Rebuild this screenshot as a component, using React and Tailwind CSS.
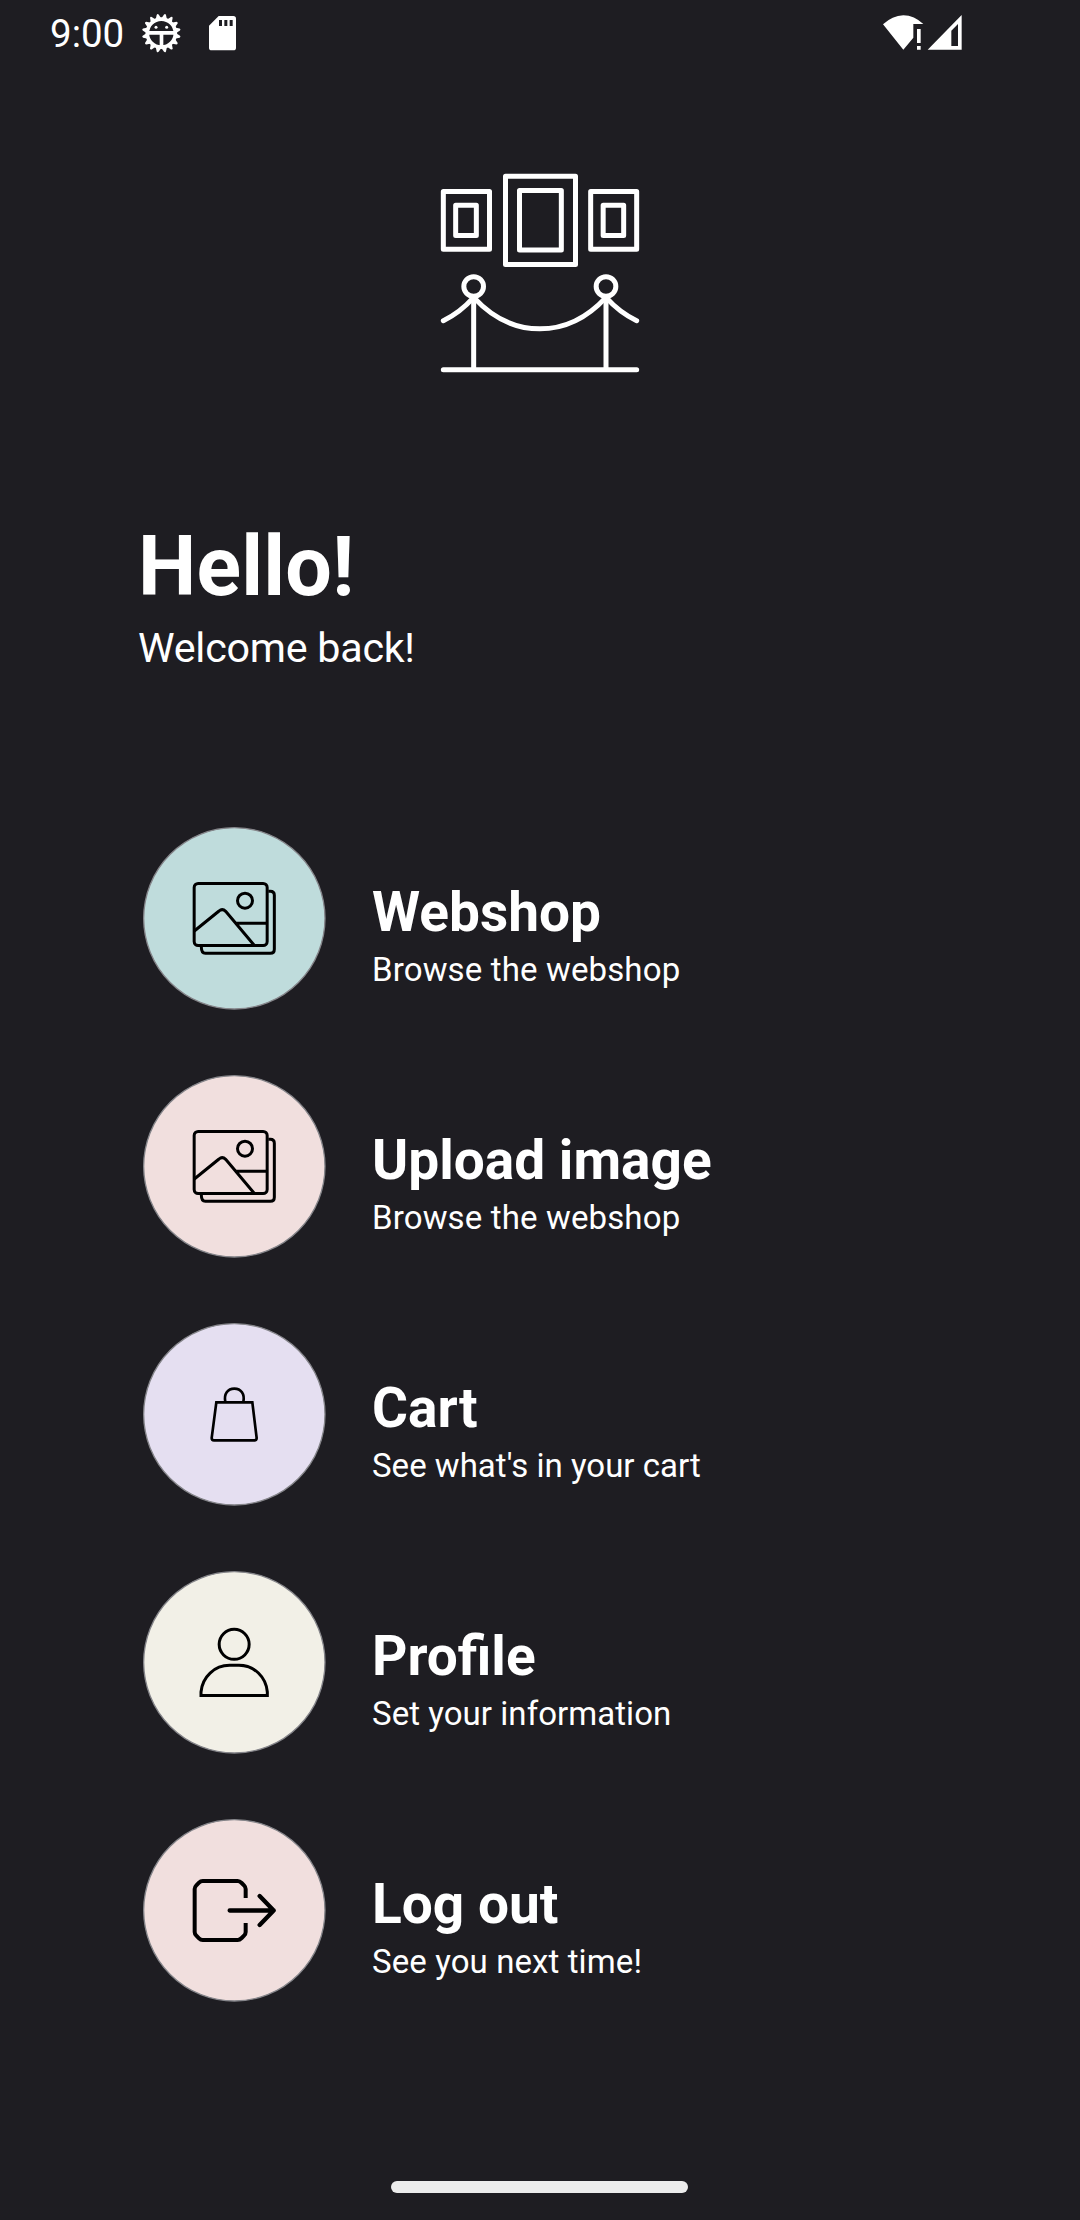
const ink = { fill: 'none', stroke: '#000' };

function Photos() {
  return (
    <g {...ink} strokeWidth="9">
      <rect x="193.500" y="205.500" width="219" height="186" rx="12" />
      <path d="M416 229H422Q434 229 434 241V403Q434 415 422 415H227Q215 415 215 396" />
      <circle cx="346" cy="257" r="22.500" />
      <path d="M194 348L268 288Q278 279 288 289L373 390M320 325H412" />
    </g>
  );
}

function Bag() {
  return (
    <g {...ink} strokeWidth="8">
      <path d="M260 277H368L381 384Q381 391 374 391H253Q246 391 246 384Z" />
      <path d="M287 276C282 252 294 236 314 236S346 252 341 276" />
    </g>
  );
}

function Person() {
  return (
    <g {...ink} strokeWidth="9">
      <circle cx="313.500" cy="253" r="45" />
      <path d="M214 406.500V396C218 351 254 316 300 316H328C374 316 409 351 413 396V406.500Z" />
    </g>
  );
}

function Exit() {
  return (
    <g {...ink} strokeWidth="12">
      <path d="M348 279V252Q348 246 343 241L336 234Q330 228 324 228H219Q213 228 208 233L200 241Q195 246 195 252V381Q195 387 200 392L208 400Q213 405 219 405H324Q330 405 336 399L343 392Q348 387 348 381V354" />
      <path d="M300 316.500H432M390 273L432 316.500L390 360" strokeWidth="13" strokeLinecap="round" strokeLinejoin="round" />
    </g>
  );
}

const items = [
  { title: 'Webshop', text: 'Browse the webshop', tracking: 'tracking-[0.14px]', color: '#bfdcdc', top: 36, Icon: Photos },
  { title: 'Upload image', text: 'Browse the webshop', tracking: 'tracking-[0.14px]', color: '#f1dfde', top: 36, Icon: Photos },
  { title: 'Cart', text: "See what's in your cart", tracking: 'tracking-[0.02px]', color: '#e5dff1', top: 39, Icon: Bag },
  { title: 'Profile', text: 'Set your information', tracking: 'tracking-[0.05px]', color: '#f2f0e7', top: 33, Icon: Person },
  { title: 'Log out', text: 'See you next time!', tracking: 'tracking-[0.1px]', color: '#f1dfde', top: 42, Icon: Exit },
];

const teeth = Array.from({ length: 16 }, (_, i) => i * 22.5);

function StatusBar() {
  return (
    <header className="flex h-[70px] items-start pl-[50px]">
      <span className="mt-[11px] w-[76px] whitespace-nowrap text-[38.500px] leading-[46px]">9:00</span>
      <svg className="ml-[14px] mt-[12px] h-[42px] w-[42px]" viewBox="330 36 126 126" fill="none" stroke="#fff">
        <circle cx="394" cy="99.500" r="42" strokeWidth="11" />
        <g fill="#fff" stroke="none">
          {teeth.map((a) => (
            <path key={a} d="M385 57L391 43Q394 39 397 43L403 57Z" transform={`rotate(${a + 11.25} 394 99.500)`} />
          ))}
          <path d="M350 93H438V104H400V142H389V104H350Z" />
          <circle cx="378" cy="82" r="4.500" />
          <circle cx="410" cy="82" r="4.500" />
        </g>
      </svg>
      <svg className="ml-[26px] mt-[15px] h-[36px] w-[28px]" viewBox="534 45 84 108">
        <path fill="#fff" fillRule="evenodd" d="M566 48H610Q618 48 618 56V143Q618 151 610 151H545Q537 151 537 143V77ZM567 60V78H576V60ZM583 60V78H592V60ZM599 60V78H608V60Z" />
      </svg>
      <svg className="ml-[646px] mt-[14px] h-[38px] w-[82px]" viewBox="66 42 246 114">
        <g fill="#fff">
          <path d="M69 73Q97 46 130 45.500Q163 46 190 72H160V113L130 149Z" />
          <path d="M171 87H182V129H171ZM171 138H182V149H171Z" />
          <path fillRule="evenodd" d="M305 45V149H203ZM294 72L274 92V138H294Z" />
        </g>
      </svg>
    </header>
  );
}

function Logo() {
  return (
    <svg className="mt-[90px] h-[225px] w-[240px] self-center" viewBox="0 0 720 675" fill="none" stroke="#fff" strokeWidth="15" strokeLinecap="round" strokeLinejoin="round">
      <path d="M70 94.500H208.500V268H70ZM107 135.500H169V226.500H107Z" />
      <path d="M256.500 49H466.500V313.500H256.500ZM298.500 91.500H424V270H298.500Z" />
      <path d="M512 94.500H650V268H512ZM549.500 135.500H611V226.500H549.500Z" />
      <circle cx="161" cy="379.500" r="29.500" />
      <circle cx="558" cy="379.500" r="29.500" />
      <path d="M161 410V628M558 410V628M70 629H650" />
      <path d="M70 482Q121 457 161 412C277 538 442 538 558 412Q598 457 650 482" />
    </svg>
  );
}

export default function App() {
  return (
    <div className="flex h-[2220px] w-[1080px] flex-col overflow-hidden bg-[#1e1d22] font-['Roboto',sans-serif] text-white">
      <StatusBar />
      <Logo />
      <section className="mt-[134px] pl-[138px]">
        <h1 className="text-[82.500px] font-bold leading-[96px] tracking-[0.2px]">Hello!</h1>
        <p className="mt-[9px] text-[41.250px] leading-[48px] tracking-[-0.25px]">Welcome back!</p>
      </section>
      <nav className="mt-[155px] flex flex-col gap-[65px] pl-[143px]">
        {items.map(({ title, text, tracking, color, top, Icon }) => (
          <a key={title} className="flex h-[183px] items-start">
            <svg className="h-[183px] w-[183px] shrink-0" viewBox={`40 ${top} 549 549`}>
              <circle cx="314" cy={top + 274} r="272" fill={color} stroke="#85858a" strokeWidth="4" />
              <Icon />
            </svg>
            <div className="ml-[46px] mt-[53px]">
              <h2 className="text-[55px] font-bold leading-[64px]">{title}</h2>
              <p className={`mt-[7px] text-[33px] leading-[38px] ${tracking}`}>{text}</p>
            </div>
          </a>
        ))}
      </nav>
      <div className="mb-[27px] ml-[391px] mt-auto h-[12px] w-[297px] rounded-full bg-[#ececec]" />
    </div>
  );
}
